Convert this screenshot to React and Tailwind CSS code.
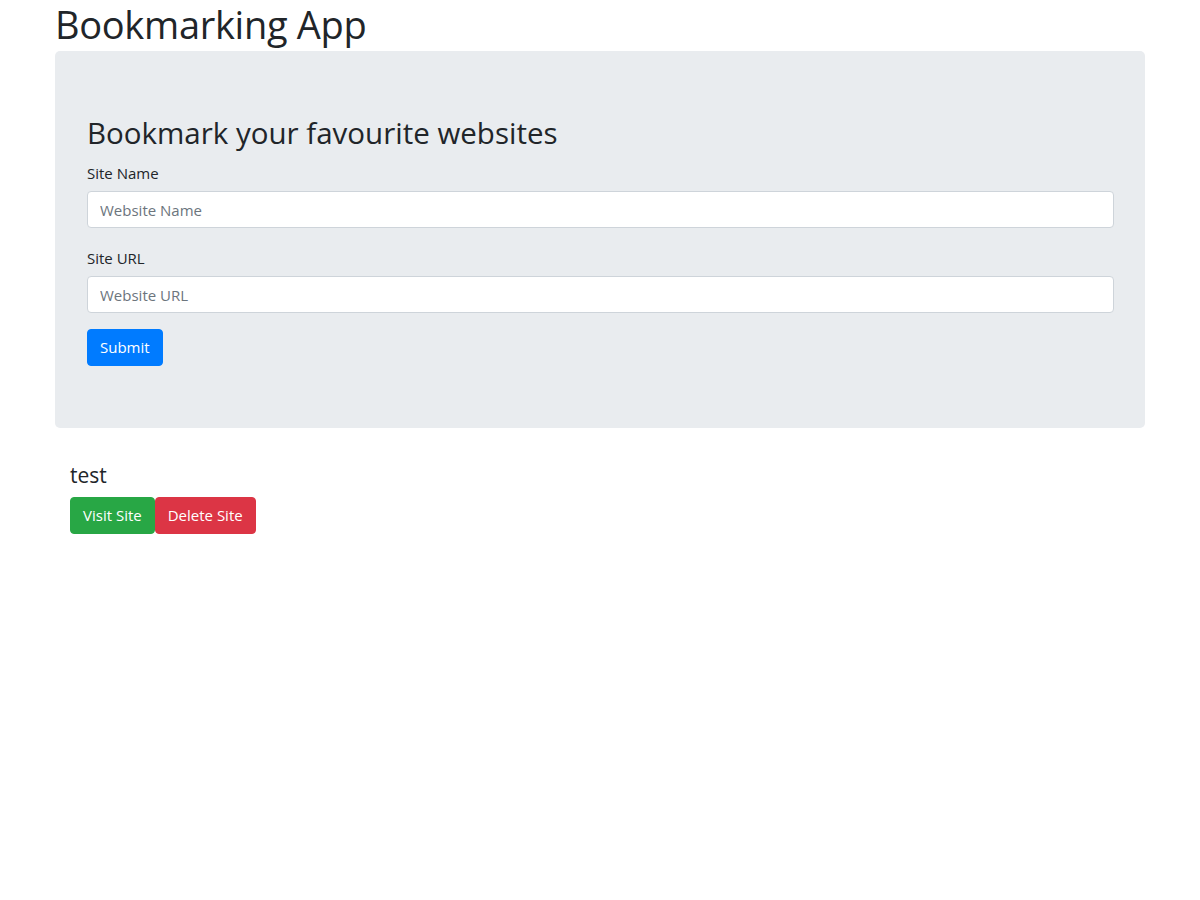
import React, { useState } from 'react';

export default function App() {
  const [name, setName] = useState('');
  const [url, setUrl] = useState('');
  const [sites] = useState([{ name: 'test', url: 'http://test.com' }]);

  return (
    <div className="min-h-screen bg-white text-[#212529] font-['Open_Sans','Noto_Sans',sans-serif]">
      <div className="w-[1090px] mx-auto">
        <h1 className="text-[38px] leading-[48px] mb-[3px] font-normal tracking-[-0.3px]">Bookmarking App</h1>

        <div className="bg-[#e9ecef] rounded-[5px] px-8 pt-16 pb-[62px] mb-[35px]">
          <h3 className="text-[29.5px] leading-9 mb-[10px]">Bookmark your favourite websites</h3>
          <div className="mb-[18px]">
            <label className="block text-[15px] leading-6 mb-[6px]">Site Name</label>
            <input
              value={name}
              onChange={(e) => setName(e.target.value)}
              placeholder="Website Name"
              className="block w-[1027px] h-[37px] px-3 text-[15px] bg-white border border-[#ced4da] rounded placeholder:text-[#6c757d] outline-none"
            />
          </div>
          <div className="mb-4">
            <label className="block text-[15px] leading-6 mb-[6px]">Site URL</label>
            <input
              value={url}
              onChange={(e) => setUrl(e.target.value)}
              placeholder="Website URL"
              className="block w-[1027px] h-[37px] px-3 text-[15px] bg-white border border-[#ced4da] rounded placeholder:text-[#6c757d] outline-none"
            />
          </div>
          <button className="h-[37px] px-3 text-[15px] text-white bg-[#007bff] border border-[#007bff] rounded">Submit</button>
        </div>

        <div className="pl-[15px]">
          {sites.map((site, idx) => (
            <div key={idx}>
              <h5 className="text-[21px] leading-6 mb-[10px]">{site.name}</h5>
              <div className="flex">
                <a href={site.url} className="h-[37px] px-3 flex items-center text-[15px] text-white bg-[#28a745] border border-[#28a745] rounded">Visit Site</a>
                <button className="h-[37px] px-3 text-[15px] text-white bg-[#dc3545] border border-[#dc3545] rounded">Delete Site</button>
              </div>
            </div>
          ))}
        </div>
      </div>
    </div>
  );
}
